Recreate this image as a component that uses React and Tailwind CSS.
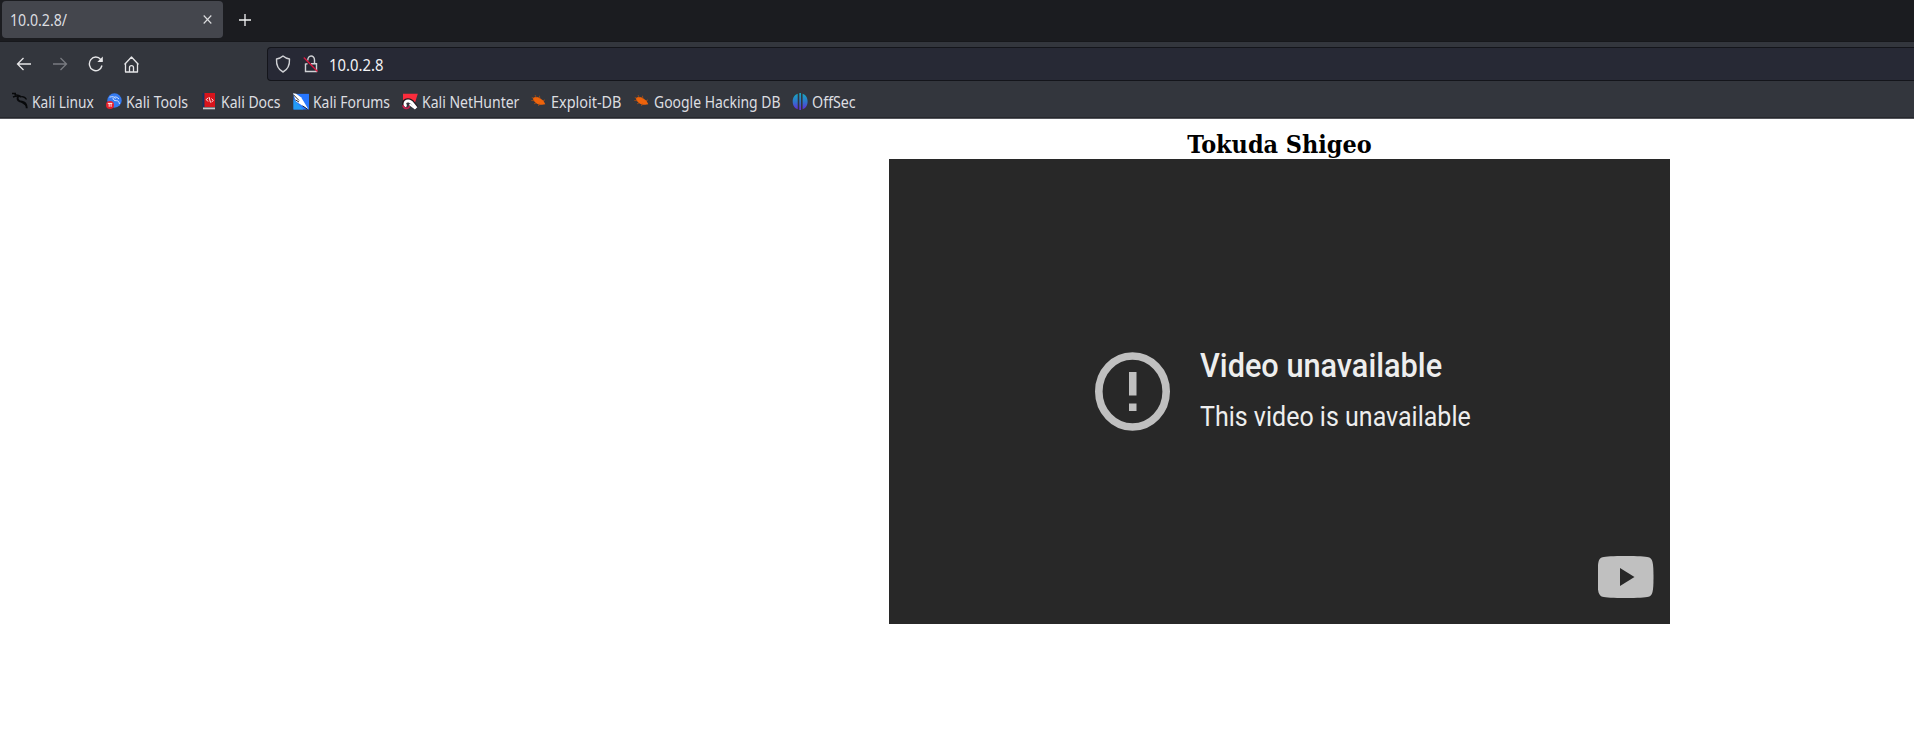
import React from "react";

const LinuxIcon = () => (
  <svg viewBox="0 0 16 18" className="h-4.5 w-4" fill="none" stroke="#08090b">
    <path d="M0 1.500h4M1 5c3-1.200 5-1.200 7.500-.500M2.500 3C5 2.500 7 3 9 4.500" strokeWidth="1.400" />
    <path d="M6 4.500C4.500 8.500 7.500 9.500 10 9.800c3 .3 4.500 2.700 4.800 6.500" strokeWidth="1.900" />
    <path d="M8 5c2.500-.8 5 0 6.500 2.500M9.500 10l5 3.500" strokeWidth="1.300" />
  </svg>
);

const ToolsIcon = () => (
  <svg viewBox="0 0 16 16" className="h-4 w-4">
    <circle cx="8.500" cy="7.500" r="7.200" fill="#367bf0" />
    <path d="M3.500 4.200c3-1 5-.5 6 1.500M7 5c0 2 1.500 2.700 3.500 2.700s2.700 1.500 3 3.300M8.500 4c1.500-.3 3 .5 4.500 2" fill="none" stroke="#e4edff" strokeWidth=".9" />
    <circle cx="4" cy="11.900" r="4" fill="#e8202c" />
    <path d="M1.800 10.400h4.500M3.200 10.400v3.400M5.100 10.400v3.400" stroke="#fff" strokeWidth=".9" />
  </svg>
);

const DocsIcon = () => (
  <svg viewBox="0 0 16 18" className="h-4.5 w-4">
    <path d="M1.500 1h2v14h-2z" fill="#172f63" />
    <path d="M3.500 1H14v14H3.500z" fill="#d8141c" />
    <path d="M2 15.500h12v1.800H2z" fill="#c8c8ca" />
    <path d="M7 6 5.200 7.500 7 9.500M10.500 6.500l1.800 2-1.800 1.500M8 5l1.500 5.500" fill="none" stroke="#fff" strokeWidth=".9" />
  </svg>
);

const ForumsIcon = () => (
  <svg viewBox="0 0 16 16" preserveAspectRatio="none" className="h-[17px] w-4">
    <path d="M.5.8H16v14.700H.5z" fill="#2777ff" />
    <path d="M.5 6v9.500h10z" fill="#239cf5" />
    <path d="M0 .3 3 .8 8 4l3 4.500 4.300 6.700L9.500 12 3 8z" fill="#fff" />
    <path d="M.3 1.500 6 7M2.500 6.500l3.500 2M9.500 12l5 3.300" stroke="#17191e" strokeWidth=".9" />
  </svg>
);

const NetHunterIcon = () => (
  <svg viewBox="0 0 16 16" preserveAspectRatio="none" className="h-[17px] w-4">
    <path d="M1 .8h14.800l-3.300 9.700L9 6 1 8z" fill="#fb2c3c" />
    <path d="M4.800 12.500C1 11.500 1.500 7.500 5.500 7c2.700-.3 4.200.9 5.600 2.700l3.200 4" fill="none" stroke="#24181e" strokeWidth="4.200" />
    <path d="M4.600 12.300C1.800 11.300 2.500 7.800 6 7.500c2.500-.2 3.800 1.300 5.100 2.900l3.200 3.800" fill="none" stroke="#fff" strokeWidth="2.700" />
    <path d="M.8 11.500c.8 3.800 6.200 4 6.700.5" fill="none" stroke="#c9214d" strokeWidth="1.500" />
    <path d="m7.500 10.500 6 4.200" stroke="#fff" strokeWidth="1.800" />
  </svg>
);

const BugIcon = () => (
  <svg viewBox="0 0 16 16" className="h-4 w-4">
    <path d="M1.800 5.200C4 3.300 6.800 3.800 9 5.200l3.500 2.600 1.800 3.500-3.200.400C7 12.300 3 9.500 1.800 5.200z" fill="#ee630b" />
    <path d="m.3 7.500 3 .2M4 2l1.500 3M8.500 2.800l.3 3M.8 4.500l2 .7M14 6.800l-2 1.200M3 10.800l2-.8M7.500 13l.8-2.500" stroke="#b8520f" strokeWidth=".7" />
  </svg>
);

const OffSecIcon = () => (
  <svg viewBox="0 0 16 16" preserveAspectRatio="none" className="h-[17px] w-4">
    <defs>
      <linearGradient id="offsec" x1="0" y1="0" x2="0" y2="16" gradientUnits="userSpaceOnUse">
        <stop offset="0" stopColor="#17a9bd" />
        <stop offset=".5" stopColor="#2d77cc" />
        <stop offset="1" stopColor="#6727d8" />
      </linearGradient>
    </defs>
    <path d="M5.700.7v14.600C2.700 14.500.7 11.700.7 8S2.700 1.500 5.700.7zM7.300 0h1.700v16H7.300zM10.600.7c3 .8 5 3.600 5 7.300s-2 6.500-5 7.300z" fill="url(#offsec)" />
  </svg>
);

const bookmarks = [
  { label: "Kali Linux", Icon: LinuxIcon, slot: "w-[94px]", fit: "scale-x-[0.98]" },
  { label: "Kali Tools", Icon: ToolsIcon, slot: "w-[95px]", fit: "scale-x-[1.01]" },
  { label: "Kali Docs", Icon: DocsIcon, slot: "w-[92px]", fit: "scale-x-100" },
  { label: "Kali Forums", Icon: ForumsIcon, slot: "w-[109px]", fit: "scale-x-[0.995]" },
  { label: "Kali NetHunter", Icon: NetHunterIcon, slot: "w-[129px]", fit: "scale-x-100" },
  { label: "Exploit-DB", Icon: BugIcon, slot: "w-[103px]", fit: "scale-x-[1.03]" },
  { label: "Google Hacking DB", Icon: BugIcon, slot: "w-[158px]", fit: "scale-x-[0.995]" },
  { label: "OffSec", Icon: OffSecIcon, slot: "w-[80px]", fit: "scale-x-[1.02]" },
];

function TabStrip() {
  return (
    <div className="flex h-[42px] items-start border-b border-[#17181c] bg-[#1b1c20] pt-px pl-0.5">
      <div className="flex h-[37px] w-[221px] items-center justify-between rounded bg-[#44464d] pr-[11px] pl-2">
        <span className="inline-block origin-left scale-x-[1.01] scale-y-[1.14] text-[14px] whitespace-nowrap">10.0.2.8/</span>
        <svg viewBox="0 0 9 9" className="h-[9px] w-[9px]" stroke="#dcdddf" strokeWidth="1.100">
          <path d="m.7.500 7.600 8M8.300.500.7 8.500" />
        </svg>
      </div>
      <svg viewBox="0 0 12 12" className="mt-[13px] ml-4 h-3 w-3" stroke="#f3f3f4" strokeWidth="1.300">
        <path d="M0 6h12M6 0v12" />
      </svg>
    </div>
  );
}

function Toolbar() {
  return (
    <div className="flex h-[42px] pt-[5px]">
      <div className="flex h-[34px] w-[267px] items-center pl-4">
        <svg viewBox="0 0 16 16" className="h-4 w-4" fill="none" stroke="#e6e6e8" strokeWidth="1.300">
          <path d="M15 8H1.500M7.500 2 1.500 8l6 6" />
        </svg>
        <svg viewBox="0 0 16 16" className="ml-5 h-4 w-4" fill="none" stroke="#797b81" strokeWidth="1.300">
          <path d="M1 8h13.500M8.500 2l6 6-6 6" />
        </svg>
        <svg viewBox="0 0 16 16" className="ml-5 h-4 w-4" fill="none" stroke="#e6e6e8" strokeWidth="1.400">
          <path d="M14 9.500A6.400 6.800 0 1 1 12.800 3.600L14 5" />
          <path d="M14.800.500V6H9.300z" fill="#e6e6e8" stroke="none" />
        </svg>
        <svg viewBox="0 0 16 17" className="ml-5 h-[17px] w-4" fill="none" stroke="#e6e6e8" strokeWidth="1.300" strokeLinejoin="round">
          <path d="M.5 8.500 7.500 1l7 7.500M1.500 7.500V16h12V7.500M5.500 16v-4.500c0-2.500 4-2.500 4 0V16" />
        </svg>
      </div>
      <div className="flex h-[34px] flex-1 items-center rounded-l border border-r-0 border-[#14151b] bg-[#272935] pl-[7px]">
        <svg viewBox="0 0 16 18" className="h-[18px] w-4" fill="none" stroke="#d0d1d5" strokeWidth="1.400" strokeLinejoin="round">
          <path d="M8 1c2 1.800 4 2.600 6.500 3 .3 6.500-1.500 10.500-6.500 13C3 14.500 1.200 10.500 1.500 4 4 3.600 6 2.800 8 1z" />
        </svg>
        <svg viewBox="0 0 16 18" className="ml-3 h-[18px] w-4" fill="none" stroke="#d0d1d5" strokeWidth="1.400">
          <path d="M4.800 5.500C4.500-.500 11.500-.500 11.500 5v3.500M8 8.700h5.500V16.500H2.500V9l2-.3" />
          <path d="m.8 2.500 13.700 14" stroke="#dd173f" strokeWidth="1.300" />
        </svg>
        <span className="ml-[10px] inline-block origin-left scale-x-[1.06] scale-y-[1.16] text-[14px] whitespace-nowrap text-[#f3f3f5]">10.0.2.8</span>
      </div>
    </div>
  );
}

function BookmarksBar() {
  return (
    <div className="flex h-[34px] items-center border-b border-[#26282d] pt-px pl-3">
      {bookmarks.map(({ label, Icon, slot, fit }) => (
        <div key={label} className={`flex shrink-0 items-center gap-1 ${slot}`}>
          <Icon />
          <span className={`inline-block origin-left scale-y-[1.14] text-[14px] whitespace-nowrap ${fit}`}>{label}</span>
        </div>
      ))}
    </div>
  );
}

function VideoPlayer() {
  return (
    <div className="flex h-[465px] w-[781px] flex-col bg-[#282828]">
      <div className="flex h-[397px] items-start pt-[193px] pl-[206px]">
        <svg viewBox="0 0 75 79" preserveAspectRatio="none" className="h-[79px] w-[75px] shrink-0">
          <ellipse cx="37.500" cy="39.500" rx="33.700" ry="35.500" fill="none" stroke="#c0c0c0" strokeWidth="7.600" />
          <path d="M34 20h7.500v23.500H34zM34 51.500h7.500V59H34z" fill="#c0c0c0" />
        </svg>
        <div className="-mt-px ml-[30px] flex flex-col font-[Roboto] text-[#eeeeee]">
          <span className="origin-left scale-y-[1.08] self-start text-[30.700px] leading-[30px] font-medium whitespace-nowrap">Video unavailable</span>
          <span className="mt-[23px] origin-left scale-y-[1.07] self-start text-[25px] leading-[25px] whitespace-nowrap">This video is unavailable</span>
        </div>
      </div>
      <svg viewBox="0 0 56 42" className="mr-4 h-[42px] w-14 self-end">
        <path d="M27.500 0c12 0 20 .4 23 1.200 4 1.100 5 4.800 5 19.800s-1 18.700-5 19.800c-3 .8-11 1.200-23 1.200s-20-.4-23-1.200C.5 39.700-.5 36-.5 21s1-18.700 5-19.800C7.500.4 15.500 0 27.500 0z" fill="#c0c0c0" />
        <path d="M22 12v18l14.500-9z" fill="#282828" />
      </svg>
    </div>
  );
}

export default function App() {
  return (
    <div className="h-[752px] w-[1914px] overflow-hidden bg-white font-['Noto_Sans',sans-serif] text-[#dddee1]">
      <header className="h-[119px] border-b border-[#54555b] bg-[#33363d]">
        <TabStrip />
        <Toolbar />
        <BookmarksBar />
      </header>
      <main className="flex flex-col pl-[889px]">
        <h1 className="flex h-10 w-[781px] items-end justify-center font-['DejaVu_Serif_Condensed','DejaVu_Serif',serif] text-[24.900px] leading-[28px] font-bold whitespace-nowrap text-black">
          Tokuda Shigeo
        </h1>
        <VideoPlayer />
      </main>
    </div>
  );
}
